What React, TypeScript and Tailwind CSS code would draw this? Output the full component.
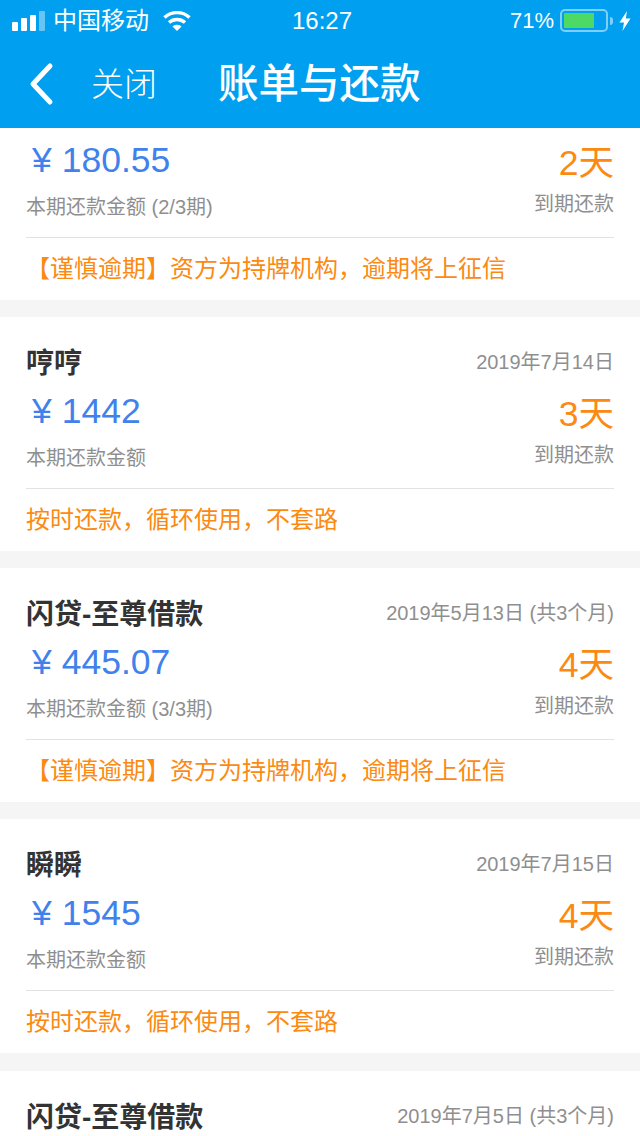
import { Fragment } from "react";

interface Bill {
  name: string;
  date: string;
  amount?: string;
  label?: string;
  days?: string;
  note?: string;
}

const CAUTION = "【谨慎逾期】资方为持牌机构，逾期将上征信";
const ON_TIME = "按时还款，循环使用，不套路";

const BILLS: Bill[] = [
  { name: "", date: "", amount: "180.55", label: "本期还款金额 (2/3期)", days: "2天", note: CAUTION },
  { name: "哼哼", date: "2019年7月14日", amount: "1442", label: "本期还款金额", days: "3天", note: ON_TIME },
  { name: "闪贷-至尊借款", date: "2019年5月13日 (共3个月)", amount: "445.07", label: "本期还款金额 (3/3期)", days: "4天", note: CAUTION },
  { name: "瞬瞬", date: "2019年7月15日", amount: "1545", label: "本期还款金额", days: "4天", note: ON_TIME },
  { name: "闪贷-至尊借款", date: "2019年7月5日 (共3个月)" },
];

function StatusBar() {
  return (
    <div className="flex h-10 items-center pt-[1px] text-white">
      <div className="flex w-[240px] items-center pl-3">
        <div className="flex items-end gap-[3px]">
          <span className="h-[9px] w-[6px] rounded-[1px] bg-white" />
          <span className="h-[13px] w-[6px] rounded-[1px] bg-white" />
          <span className="h-[16px] w-[6px] rounded-[1px] bg-white" />
          <span className="h-[20px] w-[6px] rounded-[1px] bg-white/40" />
        </div>
        <span className="ml-[8px] text-[24px] leading-none">中国移动</span>
        <svg className="ml-[14px]" width="28" height="22" viewBox="0 0 28 22" fill="none" stroke="white" strokeWidth="3.4">
          <path d="M1.5 7.5C8.5 1 19.5 1 26.5 7.5" />
          <path d="M6 12.5C10.5 8.5 17.5 8.5 22 12.5" />
          <path d="M14 20.5L10 16.5C12 14.8 16 14.8 18 16.5Z" fill="white" strokeWidth="1" />
        </svg>
      </div>
      <div className="ml-[52px] text-[24px] font-medium leading-none">16:27</div>
      <div className="ml-auto flex items-center pr-[9px]">
        <span className="text-[22px] leading-none">71%</span>
        <div className="ml-[6px] h-[23px] w-[48px] rounded-[5px] border-2 border-white/50 p-[2px]">
          <div className="h-full w-[30px] rounded-[1px] bg-[#4cd964]" />
        </div>
        <span className="ml-[2px] h-[8px] w-[3px] rounded-r-full bg-white/50" />
        <svg className="ml-[6px]" width="12" height="20" viewBox="0 0 12 20" fill="white">
          <path d="M8 0L0.5 11.5H5L3.5 20L11.5 7.5H6.8Z" />
        </svg>
      </div>
    </div>
  );
}

function BillCard({ bill }: { bill: Bill }) {
  return (
    <section className="h-[234px] shrink-0 bg-white px-[26px] pt-[29px] last:mt-px">
      <div className="flex h-[36px] items-center justify-between">
        <h2 className="text-[28px] font-semibold leading-none text-[#333333]">{bill.name}</h2>
        <span className="mb-[4px] text-[20px] leading-none text-[#8f8f8f]">{bill.date}</span>
      </div>
      {bill.amount && (
        <Fragment>
          <div className="mt-[8px] flex items-start justify-between">
            <div>
              <div className="flex h-[44px] items-center text-[35.5px] leading-none text-[#4081ec]">
                <span className="ml-[6px] mr-[10px]">¥</span>
                <span>{bill.amount}</span>
              </div>
              <div className="mt-[11px] text-[20px] leading-[26px] text-[#8f8f8f]">{bill.label}</div>
            </div>
            <div className="flex flex-col items-end">
              <div className="mt-[2px] h-[44px] text-[35.5px] leading-[44px] text-[#fb8a13]">{bill.days}</div>
              <div className="mt-[6px] text-[20px] leading-[26px] text-[#8f8f8f]">到期还款</div>
            </div>
          </div>
          <div className="mt-[17px] h-px bg-[#e2e2e2]" />
          <div className="flex h-[62px] items-center text-[24px] leading-none text-[#fb8a13]">{bill.note}</div>
        </Fragment>
      )}
    </section>
  );
}

export default function App() {
  return (
    <div
      className="flex h-[1136px] w-[640px] flex-col overflow-hidden bg-[#f5f5f5]"
      style={{ fontFamily: '"Liberation Sans", "Noto Sans CJK SC", sans-serif' }}
    >
      <header className="z-10 h-[128px] shrink-0 bg-[#009fef]">
        <StatusBar />
        <div className="flex h-[88px] items-center text-white">
          <svg className="ml-[29px]" width="26" height="44" viewBox="0 0 26 44" fill="none" stroke="white" strokeWidth="5" strokeLinecap="round" strokeLinejoin="round">
            <path d="M21 4L4 22L21 40" />
          </svg>
          <span className="ml-[36px] text-[33px] font-light leading-none">关闭</span>
          <h1 className="ml-[61px] text-[40.5px] font-medium leading-none">账单与还款</h1>
        </div>
      </header>
      {/* list is scrolled: first card sits partly under the header */}
      <main className="mt-[-62px] flex flex-col gap-[17px]">
        {BILLS.map((bill, i) => (
          <BillCard key={i} bill={bill} />
        ))}
      </main>
    </div>
  );
}
